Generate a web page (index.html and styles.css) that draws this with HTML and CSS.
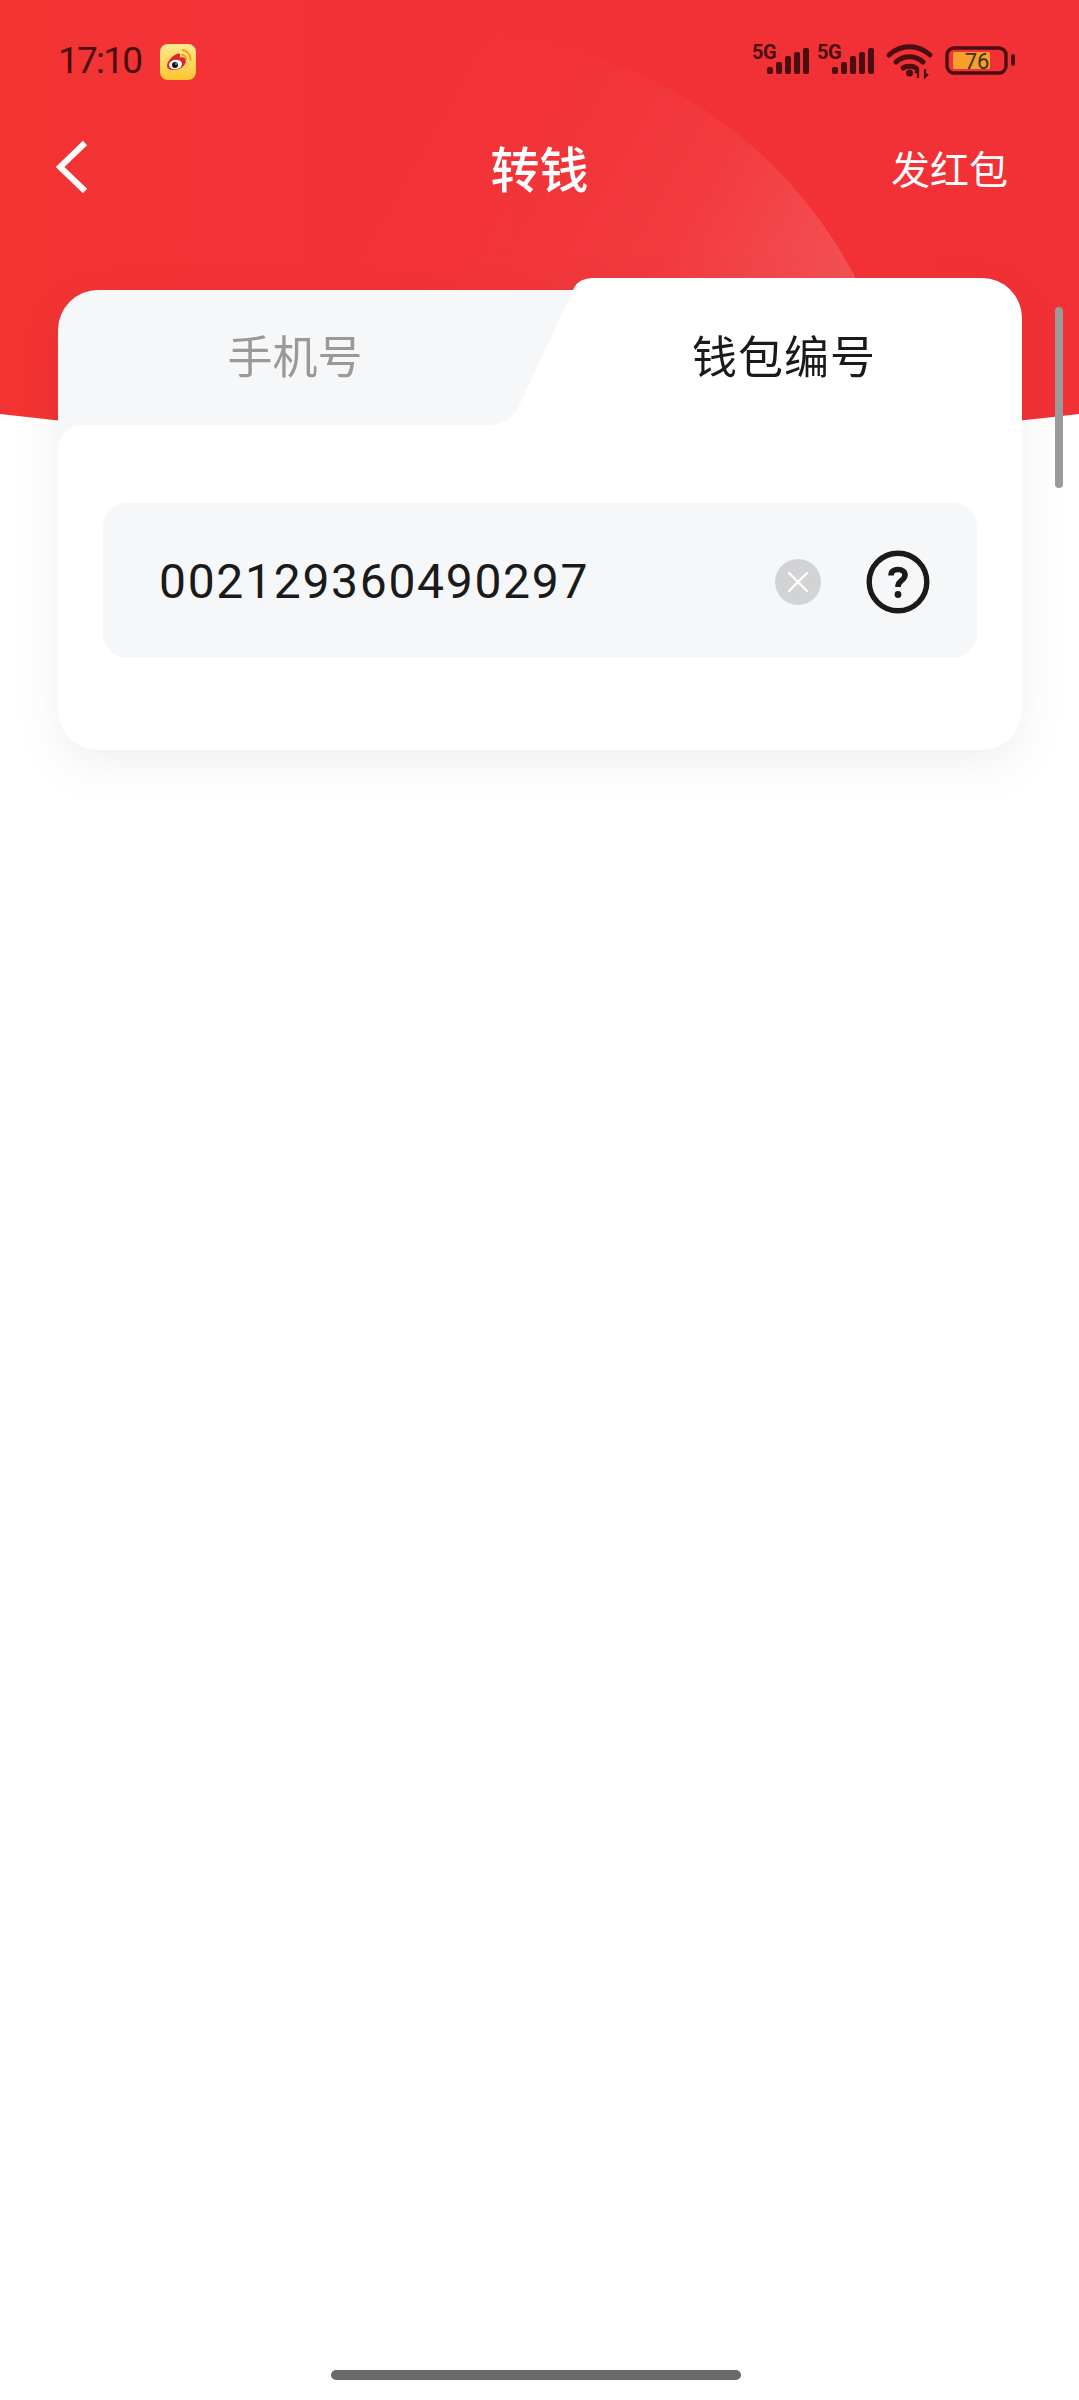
FILE: index.html
```html
<!DOCTYPE html>
<html lang="zh-CN">
<head>
<meta charset="utf-8">
<title>转钱</title>
<link rel="stylesheet" href="styles.css">
</head>
<body>
<div class="page">
  <svg class="hero-bg" viewBox="0 0 1079 480" width="1079" height="480" aria-hidden="true">
    <defs>
      <linearGradient id="heroRed" x1="0" y1="0" x2="1" y2="0">
        <stop offset="0" stop-color="#f33432"/>
        <stop offset="0.2" stop-color="#f23236"/>
        <stop offset="1" stop-color="#f23136"/>
      </linearGradient>
      <linearGradient id="heroGlow" gradientUnits="userSpaceOnUse" x1="450" y1="60" x2="860" y2="290">
        <stop offset="0" stop-color="#fff" stop-opacity="0"/>
        <stop offset="0.3" stop-color="#fff" stop-opacity="0.015"/>
        <stop offset="0.6" stop-color="#fff" stop-opacity="0.045"/>
        <stop offset="1" stop-color="#fff" stop-opacity="0.16"/>
      </linearGradient>
      <clipPath id="heroClip"><path d="M0 0H1079V414Q540 478 0 414Z"/></clipPath>
    </defs>
    <path d="M0 0H1079V414Q540 478 0 414Z" fill="url(#heroRed)"/>
    <circle cx="456" cy="485" r="450" fill="url(#heroGlow)" clip-path="url(#heroClip)"/>
  </svg>

  <header class="status-bar">
    <div class="status-left">
      <span class="time">17:10</span>
      <svg class="weibo" viewBox="0 0 36 36" width="36" height="36" aria-hidden="true">
        <defs>
          <linearGradient id="wbBg" x1="0" y1="0" x2="0" y2="1">
            <stop offset="0" stop-color="#ffe98f"/>
            <stop offset="1" stop-color="#fcc531"/>
          </linearGradient>
        </defs>
        <rect width="36" height="36" rx="8" fill="url(#wbBg)"/>
        <path d="M7 22c0-5 6-11 11-12.500 2.500-.5 2.500 1.500 1.500 4 3.500-1 6.500 0 6.500 3 0 5-6 9.500-11.500 9.500-4.500 0-7.500-1.500-7.500-4z" fill="#e0242a"/>
        <ellipse cx="15.500" cy="20.500" rx="6.500" ry="4.800" fill="#fff" transform="rotate(-8 15.500 20.500)"/>
        <circle cx="15" cy="21" r="3" fill="#111"/>
        <circle cx="16" cy="20" r="0.800" fill="#fff"/>
        <path d="M22 10.500a5 5 0 0 1 4 5.500M22.500 6a9.500 9.500 0 0 1 8 10" fill="none" stroke="#f29a1f" stroke-width="1.800" stroke-linecap="round"/>
      </svg>
    </div>
    <svg class="status-right" viewBox="-6 -8 276 48" width="276" height="48" aria-hidden="true">
      <g fill="#4a0d10">
        <text class="net" x="0" y="17">5G</text>
        <rect x="15" y="25" width="6" height="7" rx="2"/>
        <rect x="24" y="20" width="6" height="12" rx="2"/>
        <rect x="33" y="14" width="6" height="18" rx="2"/>
        <rect x="42" y="10" width="6" height="22" rx="2"/>
        <rect x="51" y="6" width="6" height="26" rx="2"/>
        <text class="net" x="65" y="17">5G</text>
        <rect x="80" y="25" width="6" height="7" rx="2"/>
        <rect x="89" y="20" width="6" height="12" rx="2"/>
        <rect x="98" y="14" width="6" height="18" rx="2"/>
        <rect x="107" y="10" width="6" height="22" rx="2"/>
        <rect x="116" y="6" width="6" height="26" rx="2"/>
      </g>
      <g fill="none" stroke="#4a0d10" stroke-width="5" stroke-linecap="round">
        <path d="M137 13C149 2 166 2 178 13"/>
        <path d="M144 20C152 13 163 13 171 20"/>
        <path d="M151 26C154 23.500 161 23.500 164 26"/>
      </g>
      <circle cx="157.500" cy="31" r="3.500" fill="#4a0d10"/>
      <path d="M166 36V28l-3 3M173 27v8l3-3" fill="none" stroke="#4a0d10" stroke-width="2.200"/>
      <rect x="195" y="6" width="59" height="25" rx="7" fill="none" stroke="#4a0d10" stroke-width="3.400"/>
      <rect x="201" y="10" width="37" height="17" rx="1.500" fill="#f5a02b"/>
      <text class="batt" x="225" y="27" text-anchor="middle">76</text>
      <rect x="259" y="12" width="4" height="12" rx="2" fill="#4a0d10"/>
    </svg>
  </header>

  <nav class="nav-bar">
    <svg class="back" viewBox="0 0 34 54" width="34" height="54" aria-hidden="true">
      <path d="M29 3L4 27L29 51" fill="none" stroke="#fff" stroke-width="6"/>
    </svg>
    <h1 class="title">转钱</h1>
    <span class="nav-action">发红包</span>
  </nav>

  <main class="card">
    <div class="tabs">
      <svg class="tabs-bg" viewBox="0 0 964 172" width="964" height="172" aria-hidden="true">
        <path d="M0 172V52A40 40 0 0 1 40 12H560V172Z" fill="#f6f7f9"/>
        <path d="M430 147Q452 147 461 128L516 10Q521 0 535 0H924A40 40 0 0 1 964 40V172H430Z" fill="#fff"/>
      </svg>
      <span class="tab tab-phone">手机号</span>
      <span class="tab tab-wallet">钱包编号</span>
    </div>
    <section class="card-body">
      <div class="field">
        <span class="field-value">002129360490297</span>
        <svg class="clear" viewBox="0 0 46 46" width="46" height="46" aria-hidden="true">
          <circle cx="23" cy="23" r="23" fill="#d2d3d5"/>
          <path d="M14 14L32 32M32 14L14 32" stroke="#fff" stroke-width="2.400" stroke-linecap="round"/>
        </svg>
        <svg class="help" viewBox="0 0 64 64" width="64" height="64" aria-hidden="true">
          <circle cx="32" cy="32" r="28.800" fill="none" stroke="#1a1a1a" stroke-width="5.400"/>
          <path d="M25 25.500C25 21.500 28 19.500 32 19.500C36 19.500 39 21.500 39 25C39 28 37 29.500 35 31C33 32.500 32 34 32 37" fill="none" stroke="#1a1a1a" stroke-width="5.600"/>
          <circle cx="32" cy="44.500" r="3.400" fill="#1a1a1a"/>
        </svg>
      </div>
    </section>
  </main>

  <div class="scrollbar"></div>
  <div class="home-bar"></div>
</div>
</body>
</html>
```

FILE: styles.css
```css
* {
  box-sizing: border-box;
}

html,
body {
  margin: 0;
  padding: 0;
  background: #fff;
}

body {
  font-family: "Noto Sans CJK SC", "Noto Sans", sans-serif;
}

.page {
  position: relative;
  width: 1079px;
  height: 2400px;
  overflow: hidden;
  display: flex;
  flex-direction: column;
  background: #fff;
}

.hero-bg {
  position: absolute;
  top: 0;
  left: 0;
}

.status-bar {
  position: relative;
  height: 122px;
  padding: 34px 57px 0 58px;
  display: flex;
  justify-content: space-between;
  align-items: flex-start;
}

.status-left {
  display: flex;
  align-items: center;
  gap: 19px;
  height: 42px;
  margin-top: 6px;
}

.time {
  width: 83px;
  font-family: Roboto, sans-serif;
  font-size: 37px;
  line-height: 42px;
  letter-spacing: -1.800px;
  color: #4a0d10;
}

.weibo {
  display: block;
  margin-top: 1px;
}

.status-right {
  display: block;
}

.net {
  font-family: Roboto, sans-serif;
  font-weight: 700;
  font-size: 20px;
  letter-spacing: -0.500px;
}

.batt {
  font-family: Roboto, sans-serif;
  font-size: 22px;
  fill: #4a2a10;
}

.nav-bar {
  position: relative;
  height: 90px;
  padding: 0 58px;
  display: grid;
  grid-template-columns: 1fr auto 1fr;
  align-items: center;
}

.back {
  display: block;
  margin-left: -2px;
}

.title {
  margin: 0;
  font-size: 49px;
  font-weight: 500;
  line-height: 64px;
  color: #fff;
}

.nav-action {
  justify-self: end;
  margin-right: 13px;
  font-size: 39px;
  line-height: 56px;
  color: #fff;
}

.card {
  position: relative;
  width: 964px;
  margin: 66px 0 0 58px;
  filter: drop-shadow(0 14px 22px rgba(0, 0, 0, 0.06));
}

.tabs {
  position: relative;
  height: 147px;
  padding-top: 6px;
  display: grid;
  grid-template-columns: 474px 490px;
  align-items: center;
  justify-items: center;
}

.tabs-bg {
  position: absolute;
  top: 0;
  left: 0;
}

.tab {
  position: relative;
  font-size: 45px;
  line-height: 60px;
}

.tab-phone {
  color: #999;
}

.tab-wallet {
  color: #1a1a1a;
  padding-left: 14px;
  letter-spacing: 1px;
}

.card-body {
  position: relative;
  height: 325px;
  padding: 78px 45px 0;
  background: #fff;
  border-radius: 24px 0 40px 40px;
}

.field {
  height: 155px;
  padding: 2px 30px 0 56px;
  display: flex;
  align-items: center;
  background: #f6f7f9;
  border-radius: 24px;
}

.field-value {
  flex: 1;
  font-family: Roboto, sans-serif;
  font-size: 48px;
  letter-spacing: 1.700px;
  color: #1a1a1a;
}

.clear {
  display: block;
  margin-right: 45px;
}

.help {
  display: block;
  margin-right: 17px;
}

.scrollbar {
  position: absolute;
  top: 307px;
  left: 1055px;
  width: 8px;
  height: 181px;
  background: #9a9a9a;
  border-radius: 4px;
}

.home-bar {
  position: absolute;
  top: 2370px;
  left: 331px;
  width: 410px;
  height: 10px;
  background: #696969;
  border-radius: 5px;
}
```
